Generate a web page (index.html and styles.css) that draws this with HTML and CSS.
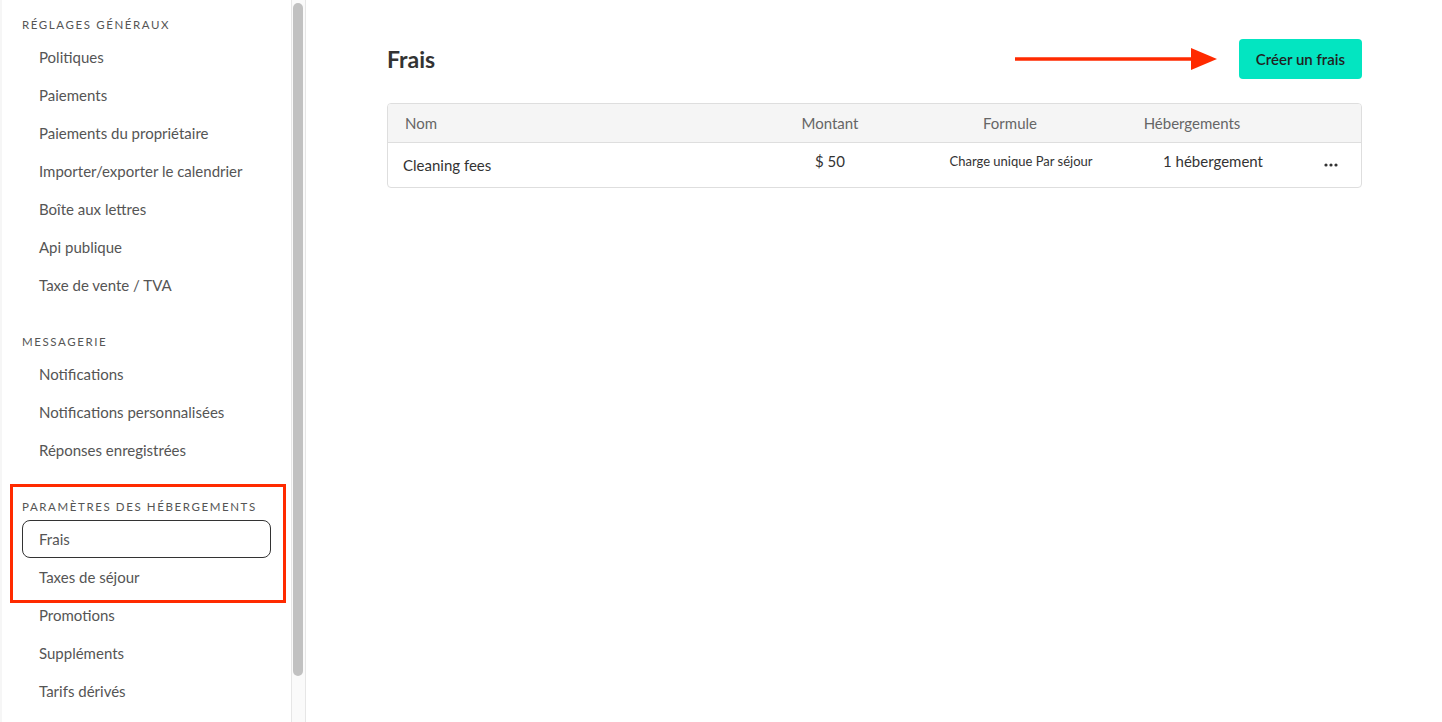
FILE: index.html
```html
<!DOCTYPE html>
<html lang="fr">
<head>
<meta charset="utf-8">
<title>Frais</title>
<link rel="stylesheet" href="styles.css">
</head>
<body>
<div class="app">
  <div class="edge"></div>
  <aside class="sidebar">
    <section class="group">
      <h3 class="group-title">Réglages généraux</h3>
      <a class="nav-item">Politiques</a>
      <a class="nav-item">Paiements</a>
      <a class="nav-item">Paiements du propriétaire</a>
      <a class="nav-item">Importer/exporter le calendrier</a>
      <a class="nav-item">Boîte aux lettres</a>
      <a class="nav-item">Api publique</a>
      <a class="nav-item">Taxe de vente / TVA</a>
    </section>
    <section class="group">
      <h3 class="group-title">Messagerie</h3>
      <a class="nav-item">Notifications</a>
      <a class="nav-item">Notifications personnalisées</a>
      <a class="nav-item">Réponses enregistrées</a>
    </section>
    <section class="group">
      <h3 class="group-title">Paramètres des hébergements</h3>
      <a class="nav-item active">Frais</a>
      <a class="nav-item">Taxes de séjour</a>
      <a class="nav-item">Promotions</a>
      <a class="nav-item">Suppléments</a>
      <a class="nav-item">Tarifs dérivés</a>
    </section>
    <div class="highlight-box"></div>
  </aside>
  <div class="scrollbar"><div class="thumb"></div></div>
  <main class="main">
    <div class="page-head">
      <h1 class="page-title">Frais</h1>
      <button class="btn-create">Créer un frais</button>
      <svg class="arrow" width="210" height="26" viewBox="0 0 210 26">
        <line x1="0" y1="13" x2="182" y2="13" stroke="#ff2a00" stroke-width="3.5"/>
        <polygon points="176,2 202,13 176,24" fill="#ff2a00"/>
      </svg>
    </div>
    <div class="table">
      <div class="row head">
        <div class="cell c-name">Nom</div>
        <div class="cell c-amount">Montant</div>
        <div class="cell c-formula">Formule</div>
        <div class="cell c-units">Hébergements</div>
        <div class="cell c-actions"></div>
      </div>
      <div class="row body">
        <div class="cell c-name">Cleaning fees</div>
        <div class="cell c-amount up">$ 50</div>
        <div class="cell c-formula up small">Charge unique Par séjour</div>
        <div class="cell c-units up">1 hébergement</div>
        <div class="cell c-actions">
          <svg width="14" height="4" viewBox="0 0 14 4"><circle cx="2" cy="2" r="1.6" fill="#333"/><circle cx="7" cy="2" r="1.6" fill="#333"/><circle cx="12" cy="2" r="1.6" fill="#333"/></svg>
        </div>
      </div>
    </div>
  </main>
</div>
</body>
</html>
```
FILE: styles.css
```css
* { box-sizing: border-box; }
html, body { margin: 0; padding: 0; }
body {
  font-family: Lato, "Open Sans", "Liberation Sans", sans-serif;
  background: #fff;
  color: #333;
  width: 1442px;
  height: 722px;
  overflow: hidden;
}
.app {
  display: flex;
  height: 722px;
}
.edge {
  width: 2px;
  flex: 0 0 2px;
  background: #f6f6f6;
}
.sidebar {
  position: relative;
  width: 289px;
  flex: 0 0 289px;
  padding: 17px 20px 0 20px;
  display: flex;
  flex-direction: column;
  gap: 30px;
}
.group {
  display: flex;
  flex-direction: column;
}
.group-title {
  margin: 0 0 5px;
  height: 16px;
  line-height: 16px;
  font-size: 11.5px;
  font-weight: 400;
  letter-spacing: 1.6px;
  text-transform: uppercase;
  color: #555;
}
.nav-item {
  display: block;
  height: 38px;
  line-height: 36px;
  padding-left: 16px;
  font-size: 15px;
  color: #555;
  border: 1px solid transparent;
  border-radius: 8px;
}
.nav-item.active {
  border-color: #333;
}
.highlight-box {
  position: absolute;
  left: 8px;
  top: 484px;
  width: 276px;
  height: 119px;
  border: 3px solid #ff2a00;
}
.scrollbar {
  width: 15px;
  flex: 0 0 15px;
  background: #fafafa;
  border-left: 1px solid #e6e6e6;
  border-right: 1px solid #e6e6e6;
  padding: 3px 0 0 1px;
}
.thumb {
  width: 10px;
  height: 673px;
  background: #c1c1c1;
  border-radius: 5px;
}
.main {
  flex: 1;
  padding: 39px 80px 0 81px;
}
.page-head {
  position: relative;
  display: flex;
  justify-content: space-between;
  align-items: center;
  height: 40px;
  margin-bottom: 24px;
}
.page-title {
  margin: 0;
  font-size: 23px;
  font-weight: 700;
  color: #333;
}
.btn-create {
  height: 40px;
  padding: 0 17px;
  border: none;
  border-radius: 4px;
  background: #03e5c1;
  color: #222;
  font-family: inherit;
  font-size: 15px;
  font-weight: 600;
}
.arrow {
  position: absolute;
  left: 628px;
  top: 7px;
}
.table {
  border: 1px solid #dedede;
  border-radius: 4px;
  overflow: hidden;
}
.row {
  display: grid;
  grid-template-columns: 372px 140px 220px 144px 1fr;
  align-items: center;
}
.row.head {
  height: 39px;
  background: #f5f5f5;
  border-bottom: 1px solid #dedede;
  color: #666;
  font-size: 15px;
}
.row.body {
  height: 44px;
  font-size: 15px;
  color: #333;
}
.cell { text-align: center; white-space: nowrap; }
.c-name { text-align: left; padding-left: 17px; }
.body .c-name { padding-left: 15px; }
.body .c-formula { padding-left: 22px; }
.body .c-units { padding-left: 42px; }
.c-actions { padding-left: 36px; display: flex; justify-content: center; }
.up { margin-bottom: 8px; }
.small { font-size: 13px; }
```
